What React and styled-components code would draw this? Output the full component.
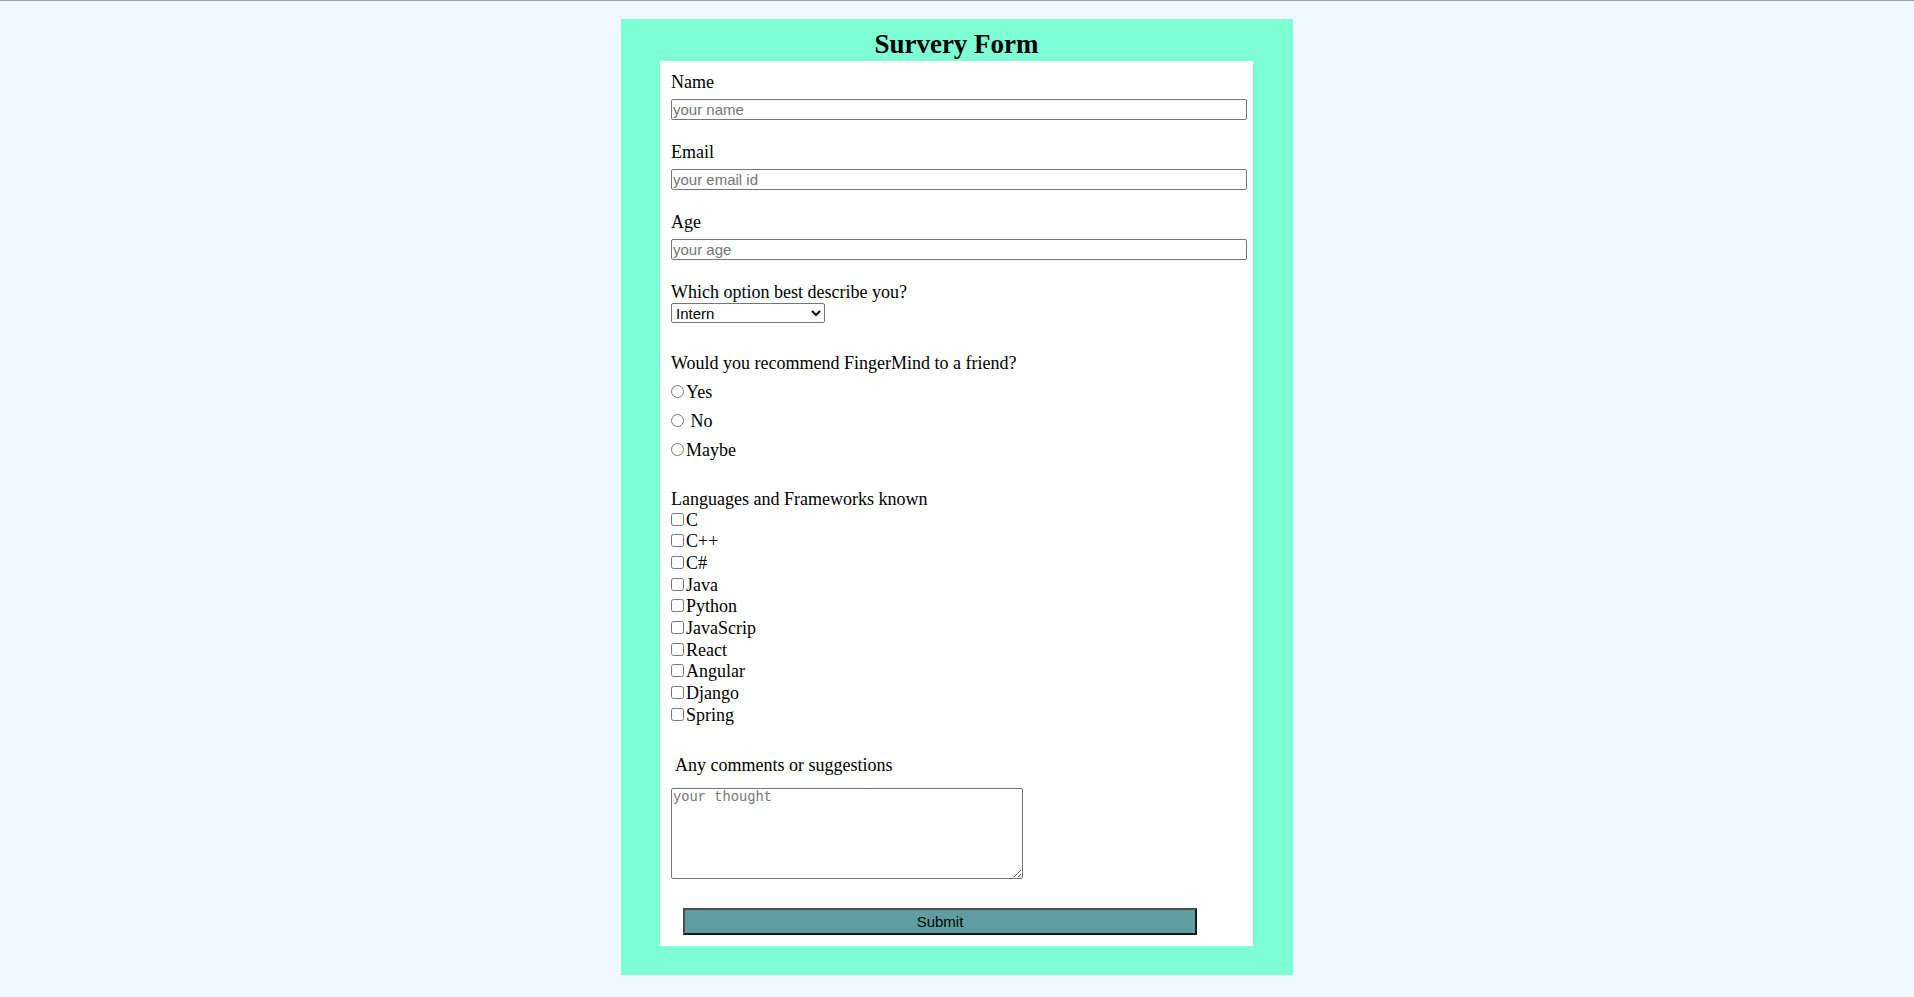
import styled, { createGlobalStyle } from "styled-components";

const GlobalStyle = createGlobalStyle`
  html, body {
    margin: 0;
    padding: 0;
  }
  body {
    background-color: aliceblue;
    border-top: 1px solid #a3a3a3;
    font-family: "Liberation Serif", "Times New Roman", serif;
    font-size: 18px;
    color: #000;
  }
`;

const Card = styled.form`
  width: 672px;
  box-sizing: border-box;
  margin: 18px auto 0;
  padding: 9px 40px 29px 39px;
  background-color: aquamarine;
`;

const Title = styled.h1`
  margin: 0;
  font-size: 27px;
  line-height: 33px;
  font-weight: 700;
  text-align: center;
`;

const Panel = styled.div`
  display: flex;
  flex-direction: column;
  align-items: flex-start;
  background: #fff;
  padding: 11px 6px 11px 11px;
`;

const Label = styled.label`
  display: block;
  line-height: 20px;
  margin-top: ${(p) => p.$top || 0}px;
  padding-left: ${(p) => p.$indent || 0}px;
`;

const TextInput = styled.input`
  box-sizing: border-box;
  width: 576px;
  height: 21px;
  margin: 7.3px 0 0;
  padding: 0 1px;
  border: 1px solid #767676;
  border-radius: 2px;
  font-family: "Liberation Sans", Arial, sans-serif;
  font-size: 15px;

  &::placeholder {
    color: #757575;
  }
`;

const Select = styled.select`
  box-sizing: border-box;
  width: 154px;
  height: 20px;
  margin: 1px 0 0;
  padding: 0;
  border: 1px solid #767676;
  border-radius: 2px;
  background: #fff;
  font-family: "Liberation Sans", Arial, sans-serif;
  font-size: 15px;
`;

const OptionRow = styled.label`
  display: block;
  line-height: 20px;
  margin-top: ${(p) => p.$top}px;
`;

const CheckList = styled.div`
  margin-top: 1.1px;
`;

const CheckRow = styled.label`
  display: block;
  line-height: 21.67px;
`;

const Mark = styled.input`
  width: 13px;
  height: 13px;
  margin: 0 2px 1px 0;
  vertical-align: baseline;
`;

const CommentBox = styled.textarea`
  box-sizing: border-box;
  width: 352px;
  height: 91px;
  margin: 13px 0 0;
  padding: 1px;
  border: 1px solid #767676;
  border-radius: 2px;
  font-family: "Liberation Mono", "DejaVu Sans Mono", monospace;
  font-size: 13.75px;

  &::placeholder {
    color: #757575;
  }
`;

const SubmitButton = styled.button`
  box-sizing: border-box;
  width: 514px;
  height: 27px;
  margin: 29px 0 0 12px;
  padding: 0;
  background-color: cadetblue;
  border: 2px solid;
  border-color: #4d4d4d #1a1a1a #1a1a1a #4d4d4d;
  font-family: "Liberation Sans", Arial, sans-serif;
  font-size: 15px;
  color: #000;
`;

const fields = [
  { label: "Name", placeholder: "your name", type: "text" },
  { label: "Email", placeholder: "your email id", type: "email" },
  { label: "Age", placeholder: "your age", type: "number" },
];

const roles = ["Intern", "Student", "Full Time Job", "Freelancer", "Other"];
const answers = [
  { text: "Yes", top: 9 },
  { text: " No", top: 8.5 },
  { text: "Maybe", top: 9.5 },
];
const skills = ["C", "C++", "C#", "Java", "Python", "JavaScrip", "React", "Angular", "Django", "Spring"];

export default function App() {
  return (
    <>
      <GlobalStyle />
      <Card onSubmit={(e) => e.preventDefault()}>
        <Title>Survery Form</Title>
        <Panel>
          {fields.map((f, i) => (
            <div key={f.label}>
              <Label $top={i === 0 ? 0 : 21.6}>{f.label}</Label>
              <TextInput type={f.type} placeholder={f.placeholder} />
            </div>
          ))}

          <Label $top={21.8}>Which option best describe you?</Label>
          <Select defaultValue="Intern">
            {roles.map((r) => (
              <option key={r}>{r}</option>
            ))}
          </Select>

          <Label $top={30.2}>Would you recommend FingerMind to a friend?</Label>
          {answers.map((a) => (
            <OptionRow key={a.text} $top={a.top}>
              <Mark type="radio" name="recommend" />
              {a.text}
            </OptionRow>
          ))}

          <Label $top={28.5}>Languages and Frameworks known</Label>
          <CheckList>
            {skills.map((s) => (
              <CheckRow key={s}>
                <Mark type="checkbox" />
                {s}
              </CheckRow>
            ))}
          </CheckList>

          <Label $top={28.7} $indent={4}>Any comments or suggestions</Label>
          <CommentBox placeholder="your thought" />

          <SubmitButton type="submit">Submit</SubmitButton>
        </Panel>
      </Card>
    </>
  );
}
